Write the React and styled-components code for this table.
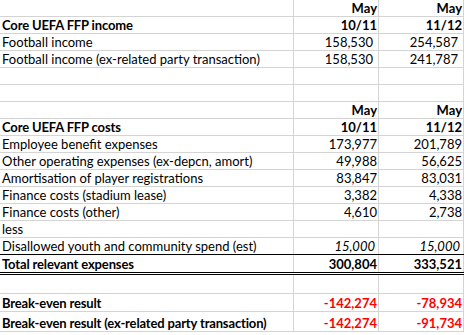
import React from 'react'
import styled, { createGlobalStyle } from 'styled-components'

const GlobalStyle = createGlobalStyle`
  body {
    margin: 0;
    background: #ffffff;
  }
`

const rows = [
  { h: 17, label: '', a: 'May', b: 'May', head: true },
  { h: 17, label: 'Core UEFA FFP income', a: '10/11', b: '11/12', head: true, bold: true },
  { h: 17, label: 'Football income', a: '158,530', b: '254,587', pr: 5 },
  { h: 17, label: 'Football income (ex-related party transaction)', a: '158,530', b: '241,787', pr: 5 },
  { h: 17 },
  { h: 17 },
  { h: 17, label: '', a: 'May', b: 'May', head: true },
  { h: 17, label: 'Core UEFA FFP costs', a: '10/11', b: '11/12', head: true, bold: true },
  { h: 17, label: 'Employee benefit expenses', a: '173,977', b: '201,789' },
  { h: 17, label: 'Other operating expenses (ex-depcn, amort)', a: '49,988', b: '56,625' },
  { h: 17, label: 'Amortisation of player registrations', a: '83,847', b: '83,031' },
  { h: 17, label: 'Finance costs (stadium lease)', a: '3,382', b: '4,338' },
  { h: 17, label: 'Finance costs (other)', a: '4,610', b: '2,738' },
  { h: 17, label: 'less' },
  { h: 17, label: 'Disallowed youth and community spend (est)', a: '15,000', b: '15,000', italic: true, pr: 3, rule: 'black' },
  { h: 20, label: 'Total relevant expenses', a: '300,804', b: '333,521', bold: true, head: true, rule: 'double' },
  { h: 19 },
  { h: 18, label: 'Break-even result', a: '-142,274', b: '-78,934', bold: true, head: true, red: true },
  { h: 20, label: 'Break-even result (ex-related party transaction)', a: '-142,274', b: '-91,734', bold: true, head: true, red: true },
]

function App() {
  return (
    <>
      <GlobalStyle />
      <Sheet>
        {rows.map((r, i) => (
          <Row key={i} $h={r.h} $rule={r.rule}>
            <LabelCell $bold={r.bold}>{r.label}</LabelCell>
            <NumCell $bold={r.head} $italic={r.italic} $red={r.red} $pr={r.pr}>{r.a}</NumCell>
            <NumCell $bold={r.head} $italic={r.italic} $red={r.red} $pr={r.pr}>{r.b}</NumCell>
          </Row>
        ))}
      </Sheet>
    </>
  )
}

const Sheet = styled.div`
  width: 466px;
  height: 335px;
  display: flex;
  flex-direction: column;
  font-family: Lato, 'Liberation Sans', sans-serif;
  font-size: 13px;
  color: #000000;
  background: #ffffff;
`

const Row = styled.div`
  width: 464px;
  height: ${p => p.$h}px;
  box-sizing: border-box;
  display: grid;
  grid-template-columns: 294px 85px 85px;
  border-bottom: ${p =>
    p.$rule === 'double' ? '3px double #000000'
      : p.$rule === 'black' ? '1px solid #000000'
      : '1px solid #d4d4d4'};
`

const Cell = styled.div`
  box-sizing: border-box;
  border-right: 1px solid #d4d4d4;
  display: flex;
  align-items: flex-end;
  line-height: 15px;
  white-space: nowrap;
  overflow: hidden;
`

const LabelCell = styled(Cell)`
  justify-content: flex-start;
  padding-left: 2px;
  font-weight: ${p => (p.$bold ? 700 : 400)};
  letter-spacing: ${p => (p.$bold ? '-0.15px' : '0')};
`

const NumCell = styled(Cell)`
  justify-content: flex-end;
  padding-right: ${p => p.$pr ?? 1}px;
  font-weight: ${p => (p.$bold ? 700 : 400)};
  font-style: ${p => (p.$italic ? 'italic' : 'normal')};
  color: ${p => (p.$red ? '#ff0000' : '#000000')};
`

export default App
